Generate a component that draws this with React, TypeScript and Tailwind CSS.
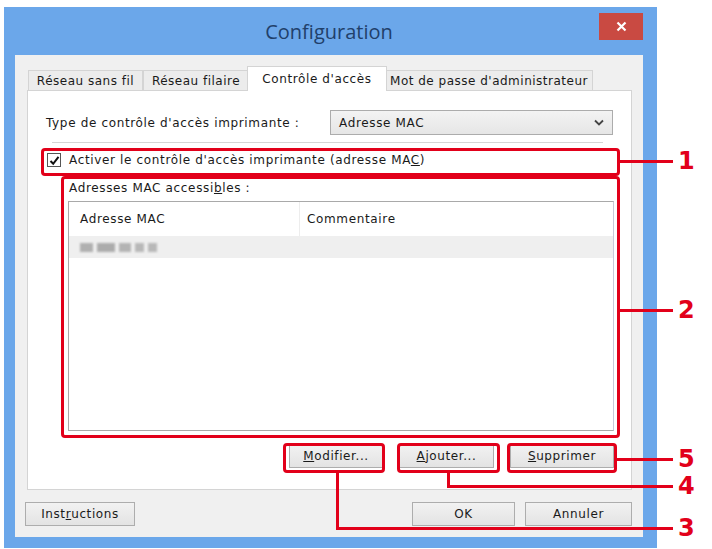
import React from "react";

const RED = "bg-[#e2001a]";

function Btn({ children, className = "" }: { children: React.ReactNode; className?: string }) {
  return (
    <div
      className={
        "h-[24px] flex items-center justify-center border border-[#adadad] bg-gradient-to-b from-[#f2f2f2] to-[#e3e3e3] text-[12px] tracking-[0.6px] text-[#1a1a1a] " +
        className
      }
    >
      {children}
    </div>
  );
}

function Tab({ label, active = false, w }: { label: string; active?: boolean; w: string }) {
  return active ? (
    <div className={`${w} h-[25px] -mb-px z-10 border border-[#d4d4d4] border-b-0 bg-white flex items-center justify-center text-[12px] tracking-[0.6px] text-[#1a1a1a] -mx-[2px]`}>
      {label}
    </div>
  ) : (
    <div className={`${w} h-[20px] border border-[#d4d4d4] border-b-0 bg-[#ececec] flex items-center justify-center text-[12px] tracking-[0.5px] text-[#1a1a1a]`}>
      {label}
    </div>
  );
}

export default function App() {
  return (
    <div
      className="w-[712px] h-[549px] bg-white relative overflow-hidden pt-[7px] pl-[4px]"
      style={{ fontFamily: '"DejaVu Sans", "Liberation Sans", sans-serif' }}
    >
      {/* Window */}
      <div className="w-[653px] h-[541px] bg-[#6ba7ea] flex flex-col pl-[11px] pr-[14px] pb-[11px]">
        {/* Title bar */}
        <div className="h-[48px] grid grid-cols-[1fr_auto_1fr]">
          <div />
          <div
            className="self-center text-[20px] text-[#21406a] pt-[1px]"
            style={{ fontFamily: '"Open Sans", "Noto Sans", sans-serif' }}
          >
            Configuration
          </div>
          <div className="justify-self-end pt-[6px]">
            <div className="w-[44px] h-[27px] bg-[#c94a42] flex items-center justify-center">
              <svg width="11" height="11" viewBox="0 0 11 11">
                <path d="M1.5 1.5 L9.5 9.5 M9.5 1.5 L1.5 9.5" stroke="#fff" strokeWidth="2.2" />
              </svg>
            </div>
          </div>
        </div>

        {/* Content */}
        <div className="flex-1 bg-[#f0f0f0] flex flex-col pl-[12px] pr-[11px] pt-[11px]">
          {/* Tabs */}
          <div className="h-[24px] flex items-end pl-[1px]">
            <Tab label="Réseau sans fil" w="w-[115px]" />
            <Tab label="Réseau filaire" w="w-[106px]" />
            <Tab label="Contrôle d'accès" w="w-[140px]" active />
            <Tab label="Mot de passe d'administrateur" w="w-[208px]" />
          </div>

          {/* Tab panel */}
          <div className="h-[400px] border border-[#d4d4d4] bg-white flex flex-col text-[12px] tracking-[0.65px] text-[#1a1a1a]">
            <div className="mt-[19px] flex items-center pl-[18px] pr-[18px]">
              <div>Type de contrôle d'accès imprimante :</div>
              <div className="ml-auto w-[283px] h-[25px] border border-[#acacac] bg-gradient-to-b from-[#f3f3f3] to-[#e6e6e6] flex items-center pl-[8px] pr-[8px]">
                <span>Adresse MAC</span>
                <svg className="ml-auto" width="10" height="7" viewBox="0 0 10 7">
                  <path d="M1 1.5 L5 5.5 L9 1.5" stroke="#444" strokeWidth="1.8" fill="none" />
                </svg>
              </div>
            </div>

            <div className="mt-[7px] h-px bg-[#d5d5d5] ml-[24px] mr-[28px]" />

            <div className="mt-[8px] flex items-center pl-[19px]">
              <div className="w-[14px] h-[14px] border border-[#555] bg-white flex items-center justify-center">
                <svg width="11" height="11" viewBox="0 0 11 11">
                  <path d="M1.5 6 L4.2 8.8 L9.5 1.8" stroke="#111" strokeWidth="2" fill="none" />
                </svg>
              </div>
              <div className="ml-[8px]">
                Activer le contrôle d'accès imprimante (adresse MA<span className="underline">C</span>)
              </div>
            </div>

            <div className="mt-[12px] pl-[41px] leading-[14px]">
              Adresses MAC accessi<span className="underline">b</span>les :
            </div>

            {/* List */}
            <div className="mt-[6px] ml-[40px] w-[546px] h-[230px] border border-[#a9a9a9] border-r-[#c8c8d8] bg-white flex flex-col">
              <div className="h-[34px] flex items-center">
                <div className="w-[231px] pl-[11px] h-full flex items-center border-r border-[#ededed]">Adresse MAC</div>
                <div className="pl-[7px]">Commentaire</div>
              </div>
              <div className="h-[22px] bg-[#efefef] flex items-center pl-[11px] gap-[4px]">
                <div className="w-[13px] h-[9px] bg-[#b0b0b0] blur-[1px]" />
                <div className="w-[18px] h-[9px] bg-[#acacac] blur-[1px]" />
                <div className="w-[12px] h-[9px] bg-[#b4b4b4] blur-[1px]" />
                <div className="w-[9px] h-[9px] bg-[#b8b8b8] blur-[1px]" />
                <div className="w-[9px] h-[9px] bg-[#b8b8b8] blur-[1px]" />
              </div>
            </div>

            {/* Buttons */}
            <div className="mt-[13px] flex justify-end pr-[17px] gap-[16px]">
              <Btn className="w-[94px]">
                <span><span className="underline">M</span>odifier...</span>
              </Btn>
              <Btn className="w-[95px]">
                <span><span className="underline">A</span>jouter...</span>
              </Btn>
              <Btn className="w-[104px]">
                <span><span className="underline">S</span>upprimer</span>
              </Btn>
            </div>
          </div>

          {/* Bottom buttons */}
          <div className="mt-[12px] flex items-center">
            <Btn className="w-[110px] -ml-[2px]">
              <span>Inst<span className="underline">r</span>uctions</span>
            </Btn>
            <Btn className="ml-auto w-[103px] border-[#4a8fd0]">OK</Btn>
            <Btn className="ml-[10px] w-[107px]">Annuler</Btn>
          </div>
        </div>
      </div>

      {/* Annotation overlay */}
      <div className="absolute inset-0 pointer-events-none">
        <div className="absolute left-[41px] top-[148px] w-[579px] h-[28px] border-[3px] border-[#e2001a] rounded-[4px]" />
        <div className="absolute left-[61px] top-[176px] w-[559px] h-[262px] border-[3px] border-[#e2001a] rounded-[4px]" />
        <div className="absolute left-[283px] top-[443px] w-[102px] h-[30px] border-[3px] border-[#e2001a] rounded-[4px]" />
        <div className="absolute left-[397px] top-[443px] w-[103px] h-[30px] border-[3px] border-[#e2001a] rounded-[4px]" />
        <div className="absolute left-[507px] top-[443px] w-[110px] h-[30px] border-[3px] border-[#e2001a] rounded-[4px]" />

        <div className={`absolute left-[620px] top-[160px] w-[53px] h-[3px] ${RED}`} />
        <div className={`absolute left-[620px] top-[309px] w-[53px] h-[3px] ${RED}`} />
        <div className={`absolute left-[617px] top-[458px] w-[56px] h-[3px] ${RED}`} />
        <div className={`absolute left-[447px] top-[473px] w-[3px] h-[15px] ${RED}`} />
        <div className={`absolute left-[447px] top-[485px] w-[226px] h-[3px] ${RED}`} />
        <div className={`absolute left-[336px] top-[473px] w-[3px] h-[57px] ${RED}`} />
        <div className={`absolute left-[336px] top-[527px] w-[337px] h-[3px] ${RED}`} />

        {[
          { n: "1", t: "top-[149px]" },
          { n: "2", t: "top-[298px]" },
          { n: "5", t: "top-[447px]" },
          { n: "4", t: "top-[474px]" },
          { n: "3", t: "top-[516px]" },
        ].map((x) => (
          <div
            key={x.n}
            className={`absolute left-[678px] ${x.t} h-[24px] leading-[24px] text-[24px] font-bold text-[#e2001a]`}
            style={{ fontFamily: '"DejaVu Sans", sans-serif' }}
          >
            {x.n}
          </div>
        ))}
      </div>
    </div>
  );
}
